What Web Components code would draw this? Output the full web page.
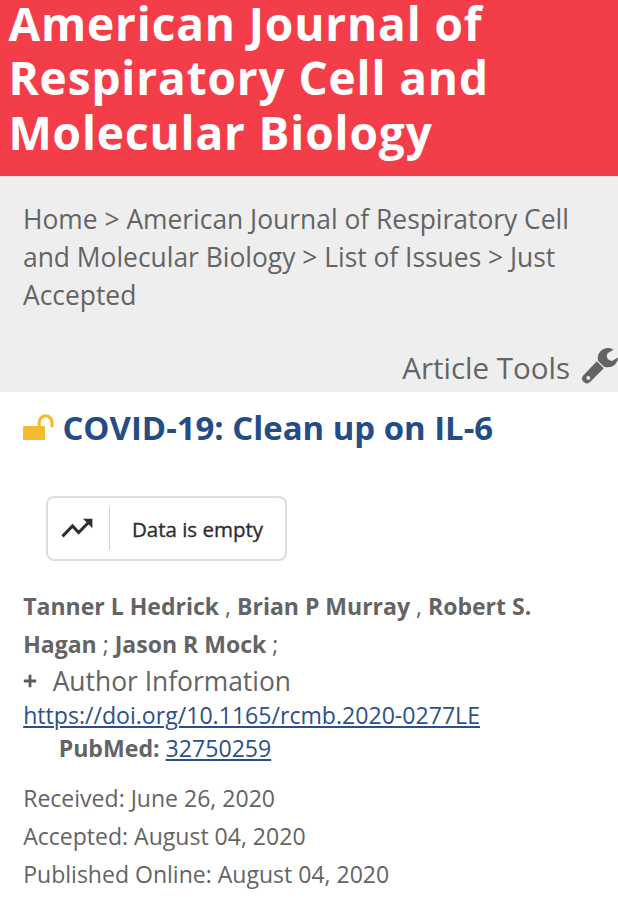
<!DOCTYPE html>
<html lang="en"><head><meta charset="utf-8"><title>COVID-19: Clean up on IL-6</title>
<style>
body{margin:0;background:#fff;color:#646464;font-family:"Open Sans","Noto Sans",sans-serif;overflow:hidden}
</style></head><body>
<journal-banner>American Journal of<br>Respiratory Cell and<br>Molecular Biology</journal-banner>
<journal-nav>Home &gt; American Journal of Respiratory Cell<br>and Molecular Biology &gt; List of Issues &gt; Just<br>Accepted<span slot="tools">Article Tools</span></journal-nav>
<article-title>COVID-19: Clean up on IL-6</article-title>
<metric-badge>Data is empty</metric-badge>
<article-meta></article-meta>
<script>
class Base extends HTMLElement{
  connectedCallback(){
    if(this.shadowRoot)return;
    const t=document.createElement('template');
    t.innerHTML=this.constructor.html;
    this.attachShadow({mode:'open'}).append(t.content.cloneNode(true));
  }
}
customElements.define('journal-banner',class extends Base{
  static html=`<style>
  :host{display:flow-root;background:#f33e4a;color:#fff;border-bottom:1px solid #f9dfe0;box-sizing:border-box;height:176.5px}
  h1{margin:-4.3px 0 0 8.4px;font-size:46px;line-height:54.4px;font-weight:700;letter-spacing:.86px;white-space:nowrap}
  </style><h1><slot></slot></h1>`});
customElements.define('wrench-icon',class extends Base{
  static html=`<style>:host{display:block;width:37px;height:38px}svg{display:block}</style>
  <svg width="37" height="38" viewBox="0 0 37 38" fill="#646464"><path fill-rule="evenodd" d="M15.8 14.3L22.8 21.3L9.1 35Q6.1 37.8 3.2 35.2L1.9 33.9Q-.4 31.2 2.3 28.4ZM7.3 29a1.9 1.9 0 1 0 0 3.8a1.9 1.9 0 0 0 0-3.8Z"/><path d="M32.6 2.8C28.6.2 23.6.5 20.3 3.6C16.7 7 16 11 17.5 14.3L23 19.7C27.4 21.2 31.8 20 34.5 17C36.4 14.9 37 12.6 36.9 10.6L31 13.9Q28.2 13.8 26.4 11.4Q25.2 8.6 26.6 6.3Z"/></svg>`});
customElements.define('journal-nav',class extends Base{
  static html=`<style>
  :host{display:flex;flex-direction:column;justify-content:space-between;height:215px;background:#eee;box-sizing:border-box;padding:23.8px 0 3.9px 23px}
  nav{font-size:26.4px;line-height:38px;white-space:nowrap}
  .tools{display:flex;justify-content:flex-end;align-items:flex-start;gap:11px;font-size:29.5px;line-height:40px}
  wrench-icon{margin-top:-1px}
  </style><nav><slot></slot></nav><div class="tools"><slot name="tools"></slot><wrench-icon></wrench-icon></div>`});
customElements.define('open-lock',class extends Base{
  static html=`<style>:host{display:block;width:32px;height:27px}svg{display:block}</style>
  <svg width="32" height="27" viewBox="0 0 32 27"><rect x="0" y="12" width="22" height="14" rx="1.2" fill="#f5bb2e"/><path d="M16.2 13V8.3a6.4 6.4 0 0 1 12.8 0V12" fill="none" stroke="#f5bb2e" stroke-width="3.2" stroke-linecap="round"/></svg>`});
customElements.define('article-title',class extends Base{
  static html=`<style>
  :host{display:flex;align-items:center;gap:7.4px;padding:13.5px 0 0 23px;height:45px}
  h2{margin:0;font-size:32.9px;line-height:45px;font-weight:700;color:#254c86;white-space:nowrap}
  open-lock{margin-bottom:1px}
  </style><open-lock></open-lock><h2><slot></slot></h2>`});
customElements.define('trend-icon',class extends Base{
  static html=`<style>:host{display:block;width:32px;height:20px}svg{display:block}</style>
  <svg width="32" height="20" viewBox="0 0 32 20"><path d="M1.5 18.4L11.5 8L17.6 14.6L27 5" fill="none" stroke="#2d2d2d" stroke-width="3"/><path d="M22 .8H31.4V10.2Z" fill="#2d2d2d"/></svg>`});
customElements.define('metric-badge',class extends Base{
  static html=`<style>
  :host{display:flex;align-items:center;box-sizing:border-box;width:241px;height:65px;margin:46px 0 0 46px;border:2px solid #dedede;border-radius:8px;color:#2d2d2d;background:#fff}
  trend-icon{margin:0 0 1px 13px}
  i{width:1.4px;height:43px;background:#d0d0d0;margin-left:16px}
  span{margin:0 0 0 21.5px;font:500 20.5px/28px "Open Sans","Noto Sans",sans-serif;-webkit-text-stroke:.35px #2d2d2d;white-space:nowrap}
  </style><trend-icon></trend-icon><i></i><span><slot></slot></span>`});
customElements.define('article-meta',class extends Base{
  static html=`<style>
  :host{display:block;padding:25.6px 0 0 23.2px;white-space:nowrap;font-size:23.1px}
  p{margin:0}
  .authors{font-size:23.02px;line-height:38px}
  .info{display:flex;align-items:center;font-size:26.4px;line-height:36px}
  .info svg{margin-right:15.5px}
  .link{line-height:33px}
  .pub{padding-left:35.5px}
  a{color:#2c5189;text-decoration:underline;text-decoration-thickness:1.5px;text-underline-offset:2px;text-decoration-skip-ink:auto}
  .dates{font-size:23.04px;line-height:38px;margin-top:14.6px}
  </style>
  <p class="authors"><b>Tanner L Hedrick</b> , <b>Brian P Murray</b> , <b>Robert S.</b><br><b>Hagan</b> ; <b>Jason R Mock</b> ;</p>
  <p class="info"><svg width="14" height="14" viewBox="0 0 14 14"><path d="M.8 7H13.2M7 .8V13.2" stroke="#5c5c5c" stroke-width="2.8"/></svg>Author Information</p>
  <p class="link"><a>https://doi.org/10.1165/rcmb.2020-0277LE</a></p>
  <p class="link pub"><b>PubMed:</b> <a>32750259</a></p>
  <p class="dates">Received: June 26, 2020<br>Accepted: August 04, 2020<br>Published Online: August 04, 2020</p>`});
</script></body></html>
